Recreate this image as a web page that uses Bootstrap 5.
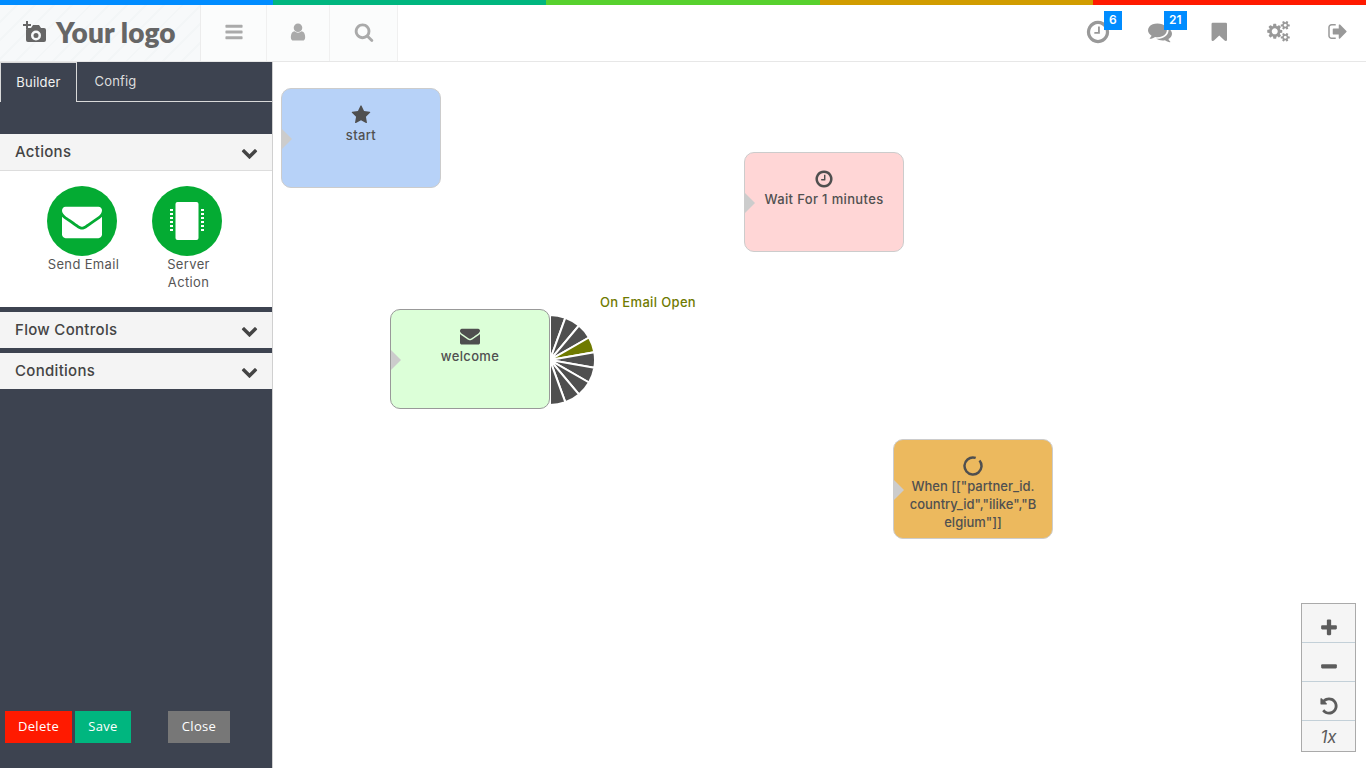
<!DOCTYPE html>
<html lang="en">
<head>
    <meta charset="UTF-8">
    <meta name="viewport" content="width=device-width, initial-scale=1.0">
    <title>Campaign Builder</title>
    <link rel="stylesheet" href="https://cdn.jsdelivr.net/npm/bootstrap@5.3.0/dist/css/bootstrap.min.css">
    <style>
        html, body { height: 100%; overflow: hidden; }
        body { font-family: "Inter", "Liberation Sans", sans-serif; font-size: 13px; color: #4f4f4f; background: #fff; }
        .ico { fill: currentColor; display: block; }

        /* rainbow strip */
        .rainbow { height: 5px; }
        .rainbow > div { flex: 1 1 0; }
        .rb-blue { background: #008cff; }
        .rb-green { background: #00b67f; }
        .rb-lime { background: #57d12e; }
        .rb-amber { background: #d19c00; }
        .rb-red { background: #ff1a00; }

        /* header */
        .topbar { height: 57px; border-bottom: 1px solid #e7e7e7; }
        .logo-box { width: 201px; background: #f7f9fa; border-right: 1px solid #ececec; padding: 0 0 3px 23px; gap: 10px; color: #666; font-family: "Lato", sans-serif; font-weight: 800; font-size: 28px; letter-spacing: .1px;
            background-image: repeating-linear-gradient(135deg, transparent 0, transparent 11px, #f3f6f7 11px, #f3f6f7 13px); }
        .tool-btn { background: #fbfcfc; border-right: 1px solid #f0f0f0; color: #aaa; padding-bottom: 3px; }
        .tool-a { width: 66px; }
        .tool-b { width: 63px; }
        .tool-c { width: 68px; }
        .top-icons { margin-right: -2px; }
        .top-icon { width: 60px; color: #999; padding-bottom: 3px; }
        .chat-glyph { margin-left: 3px; }
        .top-badge { top: 6px; left: 36px; height: 19px; min-width: 17px; padding: 0 5px; background: #008cff; color: #fff; font-size: 12px; font-weight: 600; line-height: 18px; text-align: center; }

        /* left panel */
        .side-panel { width: 273px; background: #3d4350; border-right: 1px solid #d0d0d0; }
        .side-tabs { height: 40px; border-bottom: 1px solid #d9d9d9; flex-wrap: nowrap; }
        .side-tabs .nav-link { color: #ddd; border: 0; border-radius: 0; padding: 0; height: 40px; line-height: 39px; font-size: 13px; letter-spacing: .2px; background: transparent; }
        .side-tabs .tab-builder { width: 77px; text-align: center; color: #f2f2f2; background: #3d4350; border: 1px solid #d9d9d9; border-bottom: 0; }
        .side-tabs .tab-config { width: 77px; text-align: center; }
        .fold-stack { gap: 5px; }
        .fold-head { height: 36px; background: #f4f4f4; color: #444; font-size: 15px; font-weight: 500; letter-spacing: .3px; padding: 0 14px 0 15px; border: 0; width: 100%; }
        .fold-head .ico { color: #444; }
        .fold-body { background: #fff; border-top: 1px solid #ddd; padding: 15px 0 16px 29px; }
        .tool-item { width: 105px; }
        .tool-round { width: 70px; height: 70px; border-radius: 50%; background: #04ab33; color: #fff; }
        .tool-label { padding: 0 12px 0 16px; line-height: 18px; margin-top: -1px; color: #555; text-align: center; letter-spacing: .35px; }
        .side-actions { padding: 0 0 25px 5px; }
        .side-btn { border: 0; border-radius: 0; height: 32px; color: #fff; font-size: 13px; letter-spacing: .3px; padding: 0; font-family: "Open Sans", sans-serif; }
        .btn-del { width: 67px; background: #ff1a00; margin-right: 3px; }
        .btn-sav { width: 56px; background: #00b67f; margin-right: 37px; }
        .btn-cls { width: 62px; background: #777; }

        /* canvas nodes */
        .flow-node { position: absolute; width: 160px; height: 100px; border: 1px solid #ccc; border-radius: 10px; text-align: center; font-weight: 500; letter-spacing: .35px; line-height: 18px; padding: 16px 14px 0; word-break: break-all; color: #505050; }
        .flow-node .ico { margin: 0 auto 1px; color: #4f4f4f; }
        .node-arrow { position: absolute; left: 0; top: 40px; width: 0; height: 0; border-style: solid; border-width: 10px 0 10px 10px; border-color: transparent transparent transparent #ccc; }
        .node-start { left: 8px; top: 26px; background: #b7d2f8; }
        .node-wait { left: 471px; top: 90px; background: #ffd6d6; }
        .node-mail { left: 117px; top: 247px; background: #dcffd8; border-color: #999; }
        .node-when { left: 620px; top: 377px; background: #ecb95e; letter-spacing: 0; }
        .fan { position: absolute; left: 277px; top: 253px; }
        .fan-label { position: absolute; left: 327px; top: 231px; color: #6f7a00; font-weight: 500; letter-spacing: .35px; }

        /* zoom control */
        .zoom-box { position: absolute; right: 10px; bottom: 16px; width: 55px; background: #f5f5f5; border: 1px solid #aaa; }
        .zoom-btn { height: 39px; padding-top: 10px; border-bottom: 1px solid #c3d0d8; color: #5c5c5c; }
        .zoom-btn:last-child { height: 30px; padding-top: 3px; border-bottom: 0; font-style: italic; font-size: 17px; }
    </style>
</head>
<body>
    <!-- icon sprite -->
    <svg width="0" height="0" class="position-absolute">
        <symbol id="i-bars" viewBox="0 0 1792 1792"><path d="M1664 1344v128q0 26-19 45t-45 19h-1408q-26 0-45-19t-19-45v-128q0-26 19-45t45-19h1408q26 0 45 19t19 45zm0-512v128q0 26-19 45t-45 19h-1408q-26 0-45-19t-19-45v-128q0-26 19-45t45-19h1408q26 0 45 19t19 45zm0-512v128q0 26-19 45t-45 19h-1408q-26 0-45-19t-19-45v-128q0-26 19-45t45-19h1408q26 0 45 19t19 45z"/></symbol>
        <symbol id="i-user" viewBox="0 0 1792 1792"><path d="M1536 1399q0 109-62.500 187t-150.500 78h-854q-88 0-150.500-78t-62.500-187q0-85 8.500-160.500t31.500-152 58.500-131 94-89 134.500-34.500q131 128 313 128t313-128q76 0 134.500 34.500t94 89 58.500 131 31.500 152 8.500 160.500zm-256-887q0 159-112.500 271.500t-271.500 112.500-271.500-112.500-112.500-271.500 112.500-271.500 271.500-112.500 271.500 112.500 112.500 271.500z"/></symbol>
        <symbol id="i-search" viewBox="0 0 1792 1792"><path d="M1216 832q0-185-131.500-316.500t-316.500-131.500-316.500 131.500-131.500 316.500 131.500 316.500 316.500 131.500 316.500-131.500 131.500-316.500zm512 832q0 52-38 90t-90 38q-54 0-90-38l-343-342q-179 124-399 124-143 0-273.500-55.500t-225-150-150-225-55.500-273.500 55.500-273.500 150-225 225-150 273.500-55.500 273.500 55.500 225 150 150 225 55.500 273.500q0 220-124 399l343 343q37 37 37 90z"/></symbol>
        <symbol id="i-clock" viewBox="0 0 1792 1792"><path d="M1024 544v448q0 14-9 23t-23 9h-320q-14 0-23-9t-9-23v-64q0-14 9-23t23-9h224v-352q0-14 9-23t23-9h64q14 0 23 9t9 23zm416 352q0-148-73-273t-198-198-273-73-273 73-198 198-73 273 73 273 198 198 273 73 273-73 198-198 73-273zm224 0q0 209-103 385.500t-279.500 279.500-385.500 103-385.500-103-279.500-279.500-103-385.500 103-385.500 279.500-279.500 385.500-103 385.500 103 279.500 279.500 103 385.500z"/></symbol>
        <symbol id="i-comments" viewBox="0 0 1792 1792"><path d="M1408 768q0 139-94 257t-256.500 186.500-353.500 68.500q-86 0-176-16-124 88-278 128-36 9-86 16h-3q-11 0-20.500-8t-11.500-21q-1-3-1-6.500t.5-6.500 2-6l2.500-5 3.500-5.500 4-5 4.500-5 4-4.500q5-6 23-25t26-29.500 22.500-29 25-38.500 20.500-44q-124-72-195-177t-71-224q0-139 94-257t256.500-186.500 353.500-68.500 353.500 68.500 256.500 186.500 94 257zm384 256q0 120-71 224.500t-195 176.500q10 24 20.500 44t25 38.500 22.500 29 26 29.500 23 25q1 1 4 4.500t4.500 5 4 5 3.500 5.500l2.500 5 2 6 .5 6.500-1 6.500q-3 14-13 22t-22 7q-50-7-86-16-154-40-278-128-90 16-176 16-271 0-472-132 58 4 88 4 161 0 309-45t264-129q125-92 192-212t67-254q0-77-23-152 129 71 204 178t75 230z"/></symbol>
        <symbol id="i-bookmark" viewBox="0 0 1408 1792"><path d="M1292 128q23 0 44 9 33 13 52.500 41t19.500 62v1289q0 34-19.500 62t-52.500 41q-19 8-44 8-48 0-83-32l-441-424-441 424q-36 33-83 33-23 0-44-9-33-13-52.500-41t-19.500-62v-1289q0-34 19.500-62t52.500-41q21-9 44-9h1048z"/></symbol>
        <symbol id="i-cogs" viewBox="0 0 1920 1792"><path d="M896 880q0-106-75-181t-181-75-181 75-75 181 75 181 181 75 181-75 75-181zm768 512q0-52-38-90t-90-38-90 38-38 90q0 53 37.500 90.500t90.500 37.500 90.500-37.500 37.500-90.500zm0-1024q0-52-38-90t-90-38-90 38-38 90q0 53 37.500 90.500t90.500 37.500 90.500-37.500 37.500-90.500zm-384 421v185q0 10-7 19.500t-16 10.500l-155 24q-11 35-32 76 34 48 90 115 7 11 7 20 0 12-7 19-23 30-82.500 89.500t-78.500 59.500q-11 0-21-7l-115-90q-37 19-77 31-11 108-23 155-7 24-30 24h-186q-11 0-20-7.500t-10-17.500l-23-153q-34-10-75-31l-118 89q-7 7-20 7-11 0-21-8-144-133-144-160 0-9 7-19 10-14 41-53t47-61q-23-44-35-82l-152-24q-10-1-17-9.500t-7-19.500v-185q0-10 7-19.500t16-10.500l155-24q11-35 32-76-34-48-90-115-7-11-7-20 0-12 7-20 22-30 82-89t79-59q11 0 21 7l115 90q34-18 77-32 11-108 23-154 7-24 30-24h186q11 0 20 7.500t10 17.500l23 153q34 10 75 31l118-89q8-7 20-7 11 0 21 8 144 133 144 160 0 8-7 19-12 16-42 54t-45 60q23 48 34 82l152 23q10 2 17 10.500t7 19.500zm640 533v140q0 16-149 31-12 27-30 52 51 113 51 138 0 4-4 7-122 71-124 71-8 0-46-47t-52-68q-20 2-30 2t-30-2q-14 21-52 68t-46 47q-2 0-124-71-4-3-4-7 0-25 51-138-18-25-30-52-149-15-149-31v-140q0-16 149-31 13-29 30-52-51-113-51-138 0-4 4-7 4-2 35-20t59-34 30-16q8 0 46 46.500t52 67.500q20-2 30-2t30 2q51-71 92-112l6-2q4 0 124 70 4 3 4 7 0 25-51 138 17 23 30 52 149 15 149 31zm0-1024v140q0 16-149 31-12 27-30 52 51 113 51 138 0 4-4 7-122 71-124 71-8 0-46-47t-52-68q-20 2-30 2t-30-2q-14 21-52 68t-46 47q-2 0-124-71-4-3-4-7 0-25 51-138-18-25-30-52-149-15-149-31v-140q0-16 149-31 13-29 30-52-51-113-51-138 0-4 4-7 4-2 35-20t59-34 30-16q8 0 46 46.500t52 67.500q20-2 30-2t30 2q51-71 92-112l6-2q4 0 124 70 4 3 4 7 0 25-51 138 17 23 30 52 149 15 149 31z"/></symbol>
        <symbol id="i-signout" viewBox="0 0 1664 1792"><path d="M640 1440q0 4 1 20t.5 26.500-3 23.500-10 19.500-20.500 6.500h-320q-119 0-203.500-84.500t-84.500-203.500v-704q0-119 84.500-203.500t203.500-84.500h320q13 0 22.500 9.500t9.500 22.500q0 4 1 20t.5 26.500-3 23.500-10 19.500-20.500 6.500h-320q-66 0-113 47t-47 113v704q0 66 47 113t113 47h312l11.500 1 11.500 3 8 5.500 7 9 2 13.500zm928-544q0 26-19 45l-544 544q-19 19-45 19t-45-19-19-45v-288h-448q-26 0-45-19t-19-45v-384q0-26 19-45t45-19h448v-288q0-26 19-45t45-19 45 19l544 544q19 19 19 45z"/></symbol>
        <symbol id="i-star" viewBox="0 0 1792 1792"><path d="M1728 647q0 22-26 48l-363 354 86 500q1 7 1 20 0 21-10.500 35.500t-30.500 14.500q-19 0-40-12l-449-236-449 236q-22 12-40 12-21 0-31.500-14.500t-10.500-35.500q0-6 2-20l86-500-364-354q-25-27-25-48 0-37 56-46l502-73 225-455q19-41 49-41t49 41l225 455 502 73q56 9 56 46z"/></symbol>
        <symbol id="i-envelope" viewBox="0 0 1792 1792"><path d="M1792 710v794q0 66-47 113t-113 47h-1472q-66 0-113-47t-47-113v-794q44 49 101 87 362 246 497 345 57 42 92.500 65.500t94.500 48 110 24.500h2q51 0 110-24.500t94.500-48 92.500-65.500q170-123 498-345 57-39 100-87zm0-294q0 79-49 151t-122 123q-376 261-468 325-10 7-42.500 30.500t-54 38-52 32.500-57.500 27-50 9h-2q-23 0-50-9t-57.500-27-52-32.500-54-38-42.500-30.500q-91-64-262-182.500t-205-142.500q-62-42-117-115.500t-55-136.500q0-78 41.500-130t118.500-52h1472q65 0 112.500 47t47.500 113z"/></symbol>
        <symbol id="i-chevron" viewBox="0 0 1792 1792"><path d="M1683 808l-742 741q-19 19-45 19t-45-19l-742-741q-19-19-19-45.500t19-45.500l166-165q19-19 45-19t45 19l531 531 531-531q19-19 45-19t45 19l166 165q19 19 19 45.500t-19 45.500z"/></symbol>
        <symbol id="i-plus" viewBox="0 0 1792 1792"><path d="M1600 736v192q0 40-28 68t-68 28h-416v416q0 40-28 68t-68 28h-192q-40 0-68-28t-28-68v-416h-416q-40 0-68-28t-28-68v-192q0-40 28-68t68-28h416v-416q0-40 28-68t68-28h192q40 0 68 28t28 68v416h416q40 0 68 28t28 68z"/></symbol>
        <symbol id="i-minus" viewBox="0 0 1792 1792"><path d="M1600 736v192q0 40-28 68t-68 28h-1216q-40 0-68-28t-28-68v-192q0-40 28-68t68-28h1216q40 0 68 28t28 68z"/></symbol>
        <symbol id="i-undo" viewBox="0 0 1792 1792"><path d="M1664 896q0 156-61 298t-164 245-245 164-298 61q-172 0-327-72.500t-264-204.500q-7-10-6.500-22.500t8.500-20.500l137-138q10-9 25-9 16 2 23 12 73 95 179 147t225 52q104 0 198.500-40.500t163.500-109.500 109.500-163.500 40.500-198.500-40.500-198.500-109.500-163.500-163.500-109.500-198.500-40.500q-98 0-188 35.500t-160 101.500l137 138q31 30 14 69-17 40-59 40h-448q-26 0-45-19t-19-45v-448q0-42 40-59 39-17 69 14l130 129q107-101 244.500-156.500t284.500-55.500q156 0 298 61t245 164 164 245 61 298z"/></symbol>
    </svg>

    <div class="d-flex flex-column h-100">
        <div class="rainbow d-flex">
            <div class="rb-blue"></div><div class="rb-green"></div><div class="rb-lime"></div><div class="rb-amber"></div><div class="rb-red"></div>
        </div>

        <!-- Header -->
        <header class="topbar d-flex">
            <div class="logo-box d-flex align-items-center">
                <svg class="ico" width="23" height="21" viewBox="0 0 23 21">
                    <path d="M3 0h2v3h3v2H5v3H3V5H0V3h3z"/>
                    <path fill-rule="evenodd" d="M5 7h3l2-3h6l2 3h3a2 2 0 0 1 2 2v10a2 2 0 0 1-2 2H5a2 2 0 0 1-2-2V9a2 2 0 0 1 2-2zm8 2.500a5 5 0 1 0 0 10 5 5 0 0 0 0-10zm0 2.500a2.500 2.500 0 1 1 0 5 2.500 2.500 0 0 1 0-5z"/>
                </svg>
                <span>Your logo</span>
            </div>
            <div class="tool-btn tool-a d-flex align-items-center justify-content-center"><svg class="ico" width="20" height="20"><use href="#i-bars"/></svg></div>
            <div class="tool-btn tool-b d-flex align-items-center justify-content-center"><svg class="ico" width="20" height="20"><use href="#i-user"/></svg></div>
            <div class="tool-btn tool-c d-flex align-items-center justify-content-center"><svg class="ico" width="20" height="20"><use href="#i-search"/></svg></div>

            <div class="top-icons d-flex ms-auto">
                <div class="top-icon position-relative d-flex align-items-center justify-content-center">
                    <svg class="ico" width="26" height="26"><use href="#i-clock"/></svg>
                    <span class="top-badge position-absolute">6</span>
                </div>
                <div class="top-icon position-relative d-flex align-items-center justify-content-center">
                    <svg class="ico chat-glyph" width="24" height="24"><use href="#i-comments"/></svg>
                    <span class="top-badge position-absolute">21</span>
                </div>
                <div class="top-icon d-flex align-items-center justify-content-center"><svg class="ico" width="17" height="22"><use href="#i-bookmark"/></svg></div>
                <div class="top-icon d-flex align-items-center justify-content-center"><svg class="ico" width="23" height="21"><use href="#i-cogs"/></svg></div>
                <div class="top-icon d-flex align-items-center justify-content-center"><svg class="ico" width="20" height="21"><use href="#i-signout"/></svg></div>
            </div>
        </header>

        <div class="d-flex flex-grow-1">
            <!-- Left panel -->
            <aside class="side-panel d-flex flex-column">
                <ul class="nav side-tabs">
                    <li class="nav-item"><a class="nav-link tab-builder" href="#">Builder</a></li>
                    <li class="nav-item"><a class="nav-link tab-config" href="#">Config</a></li>
                </ul>

                <div class="mt-4 pt-2 d-flex flex-column fold-stack">
                    <div>
                        <div class="fold-head d-flex align-items-center justify-content-between">Actions <svg class="ico" width="17" height="17"><use href="#i-chevron"/></svg></div>
                        <div class="fold-body d-flex">
                            <div class="tool-item d-flex flex-column align-items-center">
                                <div class="tool-round d-flex align-items-center justify-content-center"><svg class="ico" width="40" height="40"><use href="#i-envelope"/></svg></div>
                                <div class="tool-label">Send Email</div>
                            </div>
                            <div class="tool-item d-flex flex-column align-items-center">
                                <div class="tool-round d-flex align-items-center justify-content-center">
                                    <svg class="ico" width="36" height="40" viewBox="0 0 36 40">
                                        <rect x="6.500" y="1" width="23" height="38" rx="2"/>
                                        <path d="M1 8h3v2H1zM1 12h3v2H1zM1 16h3v2H1zM1 20h3v2H1zM1 24h3v2H1zM1 28h3v2H1zM32 8h3v2h-3zM32 12h3v2h-3zM32 16h3v2h-3zM32 20h3v2h-3zM32 24h3v2h-3zM32 28h3v2h-3z"/>
                                    </svg>
                                </div>
                                <div class="tool-label">Server Action</div>
                            </div>
                        </div>
                    </div>
                    <div class="fold-head d-flex align-items-center justify-content-between">Flow Controls <svg class="ico" width="17" height="17"><use href="#i-chevron"/></svg></div>
                    <div class="fold-head d-flex align-items-center justify-content-between">Conditions <svg class="ico" width="17" height="17"><use href="#i-chevron"/></svg></div>
                </div>

                <div class="mt-auto d-flex side-actions">
                    <button class="btn side-btn btn-del" type="button">Delete</button>
                    <button class="btn side-btn btn-sav" type="button">Save</button>
                    <button class="btn side-btn btn-cls" type="button">Close</button>
                </div>
            </aside>

            <!-- Canvas -->
            <main class="flex-grow-1 position-relative">
                <div class="flow-node node-start">
                    <span class="node-arrow"></span>
                    <svg class="ico" width="20" height="20"><use href="#i-star"/></svg>
                    start
                </div>
                <div class="flow-node node-wait">
                    <span class="node-arrow"></span>
                    <svg class="ico" width="20" height="20"><use href="#i-clock"/></svg>
                    Wait For 1 minutes
                </div>
                <div class="flow-node node-mail">
                    <span class="node-arrow"></span>
                    <svg class="ico" width="20" height="20"><use href="#i-envelope"/></svg>
                    welcome
                </div>
                <svg class="fan" id="emailFan" width="50" height="90" viewBox="0 0 50 90"></svg>
                <div class="fan-label">On Email Open</div>
                <div class="flow-node node-when">
                    <span class="node-arrow"></span>
                    <svg class="ico" width="20" height="20" viewBox="0 0 20 20"><circle cx="10" cy="10" r="8.500" fill="none" stroke="#4f4f4f" stroke-width="2.500" stroke-dasharray="48.400 5" transform="rotate(-40 10 10)"/></svg>
                    When [["partner_id.country_id","ilike","Belgium"]]
                </div>

                <div class="zoom-box">
                    <div class="zoom-btn d-flex align-items-center justify-content-center"><svg class="ico" width="20" height="20"><use href="#i-plus"/></svg></div>
                    <div class="zoom-btn d-flex align-items-center justify-content-center"><svg class="ico" width="20" height="20"><use href="#i-minus"/></svg></div>
                    <div class="zoom-btn d-flex align-items-center justify-content-center"><svg class="ico" width="20" height="20"><use href="#i-undo"/></svg></div>
                    <div class="zoom-btn d-flex align-items-center justify-content-center">1x</div>
                </div>
            </main>
        </div>
    </div>

    <script src="https://cdn.jsdelivr.net/npm/bootstrap@5.3.0/dist/js/bootstrap.bundle.min.js"></script>
    <script>
    // output fan of the welcome node: 9 slices, the 4th one is the active event
    document.addEventListener('DOMContentLoaded', function() {
        const fan = document.getElementById('emailFan');
        const cx = 0, cy = 45, r = 45;
        let html = '';
        for (let i = 0; i < 9; i++) {
            const a0 = (-90 + i * 20) * Math.PI / 180;
            const a1 = (-70 + i * 20) * Math.PI / 180;
            const x0 = cx + r * Math.cos(a0), y0 = cy + r * Math.sin(a0);
            const x1 = cx + r * Math.cos(a1), y1 = cy + r * Math.sin(a1);
            const color = i === 3 ? '#6f7a00' : '#4f4f4f';
            html += `<path d="M${cx} ${cy}L${x0} ${y0}A${r} ${r} 0 0 1 ${x1} ${y1}Z" fill="${color}" stroke="#fff" stroke-width="2"/>`;
        }
        fan.innerHTML = html;
    });
    </script>
</body>
</html>
